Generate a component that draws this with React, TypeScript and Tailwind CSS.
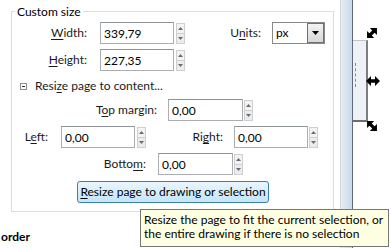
import React from "react";

const font = "font-['Segoe_UI','Lato',sans-serif]";

const Spin: React.FC<{ className?: string }> = ({ className = "" }) => {
  return (
    <div className={`flex h-[21px] w-[9px] flex-col ${className}`}>
      <div className="flex h-[11px] items-center justify-center border border-[#cfcfcf] bg-[#f3f3f3]">
        <svg width="5" height="3" viewBox="0 0 5 3">
          <path d="M0 3 L2.5 0 L5 3 Z" fill="#6b6b6b" />
        </svg>
      </div>
      <div className="-mt-px flex h-[11px] items-center justify-center border border-[#cfcfcf] bg-[#ececec]">
        <svg width="5" height="3" viewBox="0 0 5 3">
          <path d="M0 0 L2.5 3 L5 0 Z" fill="#6b6b6b" />
        </svg>
      </div>
    </div>
  );
};

const Field: React.FC<{ value: string; className?: string }> = ({ value, className = "" }) => {
  return (
    <input
      readOnly
      defaultValue={value}
      className={`h-[22px] border border-[#abadb3] border-t-[#8e9299] bg-white pl-[3px] text-[12px] text-black outline-none ${className}`}
    />
  );
};

const Label: React.FC<{ before: string; key_: string; after: string; className?: string }> = ({
  before,
  key_,
  after,
  className = "",
}) => {
  return (
    <span className={`text-right text-[12px] text-[#1a1a1a] ${className}`}>
      {before}
      <span className="underline underline-offset-2">{key_}</span>
      {after}
    </span>
  );
};

// double headed arrow used for the page scale handles, rotated per corner
const Handle: React.FC<{ rotate: number; className: string }> = ({ rotate, className }) => {
  return (
    <svg className={`absolute ${className}`} width="14" height="14" viewBox="0 0 14 14">
      <path
        d="M0 7 L5 2 L5 5.3 L9 5.3 L9 2 L14 7 L9 12 L9 8.7 L5 8.7 L5 12 Z"
        fill="#000"
        transform={`rotate(${rotate} 7 7)`}
      />
    </svg>
  );
};

const App: React.FC = () => {
  return (
    <div className={`relative flex h-[248px] w-[391px] overflow-hidden bg-white ${font}`}>
      {/* left pane */}
      <div className="flex w-[340px] flex-col">
        <fieldset className="ml-[11px] mt-[4px] w-[323px] border border-[#d5dfe5] pb-[8px]">
          <legend className="ml-[3px] px-[2px] text-[12px] leading-[15px] text-black">Custom size</legend>

          <div className="mt-[3px] flex h-[22px] items-center">
            <Label before="" key_="W" after="idth:" className="w-[75px]" />
            <Field value="339,79" className="ml-[13px] w-[74px]" />
            <Spin className="ml-[2px]" />
            <Label before="U" key_="n" after="its:" className="w-[76px]" />
            <div className="ml-[11px] flex h-[22px] w-[53px] items-center border border-[#8a8a8a] bg-white">
              <span className="pl-[3px] text-[12px] text-black">px</span>
              <div className="ml-auto flex h-[20px] w-[17px] items-center justify-center border border-[#707070] bg-gradient-to-b from-[#f2f2f2] to-[#d8d8d8]">
                <svg width="7" height="4" viewBox="0 0 7 4">
                  <path d="M0 0 L7 0 L3.5 4 Z" fill="#000" />
                </svg>
              </div>
            </div>
          </div>

          <div className="mt-[5px] flex h-[22px] items-center">
            <Label before="" key_="H" after="eight:" className="w-[75px]" />
            <Field value="227,35" className="ml-[13px] w-[74px]" />
            <Spin className="ml-[2px]" />
          </div>

          <div className="mt-[7px] flex h-[16px] items-center">
            <div className="ml-[8px] flex h-[7px] w-[7px] items-center justify-center border border-[#8e8f8f] bg-white">
              <div className="h-px w-[3px] bg-[#333]" />
            </div>
            <Label before="Resi" key_="z" after="e page to content..." className="ml-[8px]" />
          </div>

          <div className="mt-[5px] flex h-[22px] items-center">
            <Label before="T" key_="o" after="p margin:" className="w-[145px]" />
            <Field value="0,00" className="ml-[11px] w-[75px]" />
            <Spin className="ml-[1px]" />
          </div>

          <div className="mt-[5px] flex h-[22px] items-center">
            <Label before="L" key_="e" after="ft:" className="w-[36px]" />
            <Field value="0,00" className="ml-[13px] w-[74px]" />
            <Spin className="ml-[2px]" />
            <Label before="Ri" key_="g" after="ht:" className="w-[77px]" />
            <Field value="0,00" className="ml-[11px] w-[74px]" />
            <Spin className="ml-[1px]" />
          </div>

          <div className="mt-[5px] flex h-[22px] items-center">
            <Label before="Botto" key_="m" after=":" className="w-[134px]" />
            <Field value="0,00" className="ml-[12px] w-[75px]" />
            <Spin className="ml-[1px]" />
          </div>

          <div className="mt-[6px] flex">
            <button className="ml-[65px] h-[22px] w-[192px] rounded-[3px] border border-[#3c7fb1] bg-gradient-to-b from-[#eaf6fd] to-[#c4e5f8] text-[12px] text-black">
              <span className="underline underline-offset-2">R</span>esize page to drawing or selection
            </button>
          </div>
        </fieldset>

        <div className="mt-[17px] pl-[1px] text-[12px] font-bold leading-[16px] text-black">order</div>
      </div>

      {/* splitter */}
      <div className="flex w-[13px]">
        <div className="w-px bg-[#d6d6d6]" />
        <div className="w-[11px] bg-gradient-to-r from-[#e4edf7] to-[#c8d8ea]" />
        <div className="w-px bg-[#5d6b7d]" />
      </div>

      {/* canvas */}
      <div className="relative flex-1 bg-white">
        <div className="absolute left-0 top-[40px] h-[82px] w-[15px] border-b-2 border-r-2 border-t border-b-[#6e6e6e] border-r-[#7d7d7d] border-t-[#c4c4c4] bg-[#eef2f7]">
          <div className="ml-[2px] mt-[22px] h-[24px] w-0 border-l border-dashed border-[#8a8a8a]" />
        </div>
        <Handle rotate={-45} className="left-[12px] top-[26px]" />
        <Handle rotate={0} className="left-[13px] top-[74px]" />
        <Handle rotate={45} className="left-[12px] top-[119px]" />
      </div>

      {/* tooltip */}
      <div className="absolute left-[140px] top-[209px] h-[38px] w-[249px] border border-[#767676] bg-[#ffffe1] pl-[3px] pt-[3px] text-[12px] leading-[14px] text-black">
        Resize the page to fit the current selection, or
        <br />
        the entire drawing if there is no selection
      </div>
    </div>
  );
};

export default App;
